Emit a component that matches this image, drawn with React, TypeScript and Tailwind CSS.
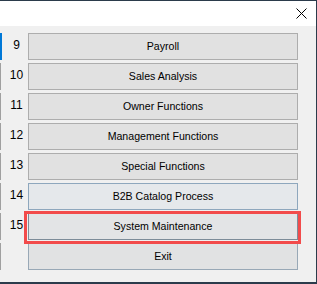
import React from "react";

type Row = { n?: string; label: string; variant: "normal" | "hover" | "focus" | "exit"; active?: boolean };

const rows: Row[] = [
  { n: "9", label: "Payroll", variant: "normal", active: true },
  { n: "10", label: "Sales Analysis", variant: "normal" },
  { n: "11", label: "Owner Functions", variant: "normal" },
  { n: "12", label: "Management Functions", variant: "normal" },
  { n: "13", label: "Special Functions", variant: "normal" },
  { n: "14", label: "B2B Catalog Process", variant: "hover" },
  { n: "15", label: "System Maintenance", variant: "focus" },
  { label: "Exit", variant: "exit" },
];

function Btn({ row }: { row: Row }) {
  if (row.variant === "focus") {
    return (
      <div className="relative w-[270px] h-[27px]">
        <div className="w-full h-full border border-[#7d8c99] bg-[#e3e4e6] flex items-center justify-center text-[10.6px] leading-[13px] text-black">
          {row.label}
        </div>
        <div className="absolute -left-[4px] -right-[3px] -top-[2px] -bottom-[4px] border-[3px] border-[#f24b4b] pointer-events-none" />
      </div>
    );
  }
  const cls =
    row.variant === "hover"
      ? "border-[#8ea7bd] bg-[#e5e8eb]"
      : row.variant === "exit"
      ? "border-[#98a8b6] bg-[#e1e2e3]"
      : "border-[#adadad] bg-[#e1e1e1]";
  return (
    <div
      className={`w-[270px] h-[27px] border ${cls} flex items-center justify-center text-[10.6px] leading-[13px] text-black`}
    >
      {row.label}
    </div>
  );
}

export default function App() {
  return (
    <div
      className="w-[317px] h-[284px] bg-[#f0f0f0] flex flex-col border-t border-r border-b-2 border-[#2b3b4b] overflow-hidden"
      style={{ fontFamily: '"Liberation Sans", Arial, sans-serif' }}
    >
      <div className="h-[25px] bg-white flex items-center justify-end pr-[9px] shrink-0">
        <svg width="11" height="11" viewBox="0 0 11 11">
          <path d="M0.5 0.5 L10.5 10.5 M10.5 0.5 L0.5 10.5" stroke="#000" strokeWidth="1" />
        </svg>
      </div>
      <div className="flex flex-col gap-[3px] pt-[7px]">
        {rows.map((r, i) => (
          <div key={i} className="flex h-[27px]">
            <div className="w-[2px] h-full">
              {r.active ? (
                <div className="w-[2px] h-full bg-[#0078d7]" />
              ) : (
                <div className="w-[1px] h-full bg-[#a0a0a0]" />
              )}
            </div>
            <div className="w-[26px] pl-[3px] pt-[5px] text-center text-[12px] leading-[14px] text-black">
              {r.n ?? ""}
            </div>
            <Btn row={r} />
          </div>
        ))}
      </div>
    </div>
  );
}
